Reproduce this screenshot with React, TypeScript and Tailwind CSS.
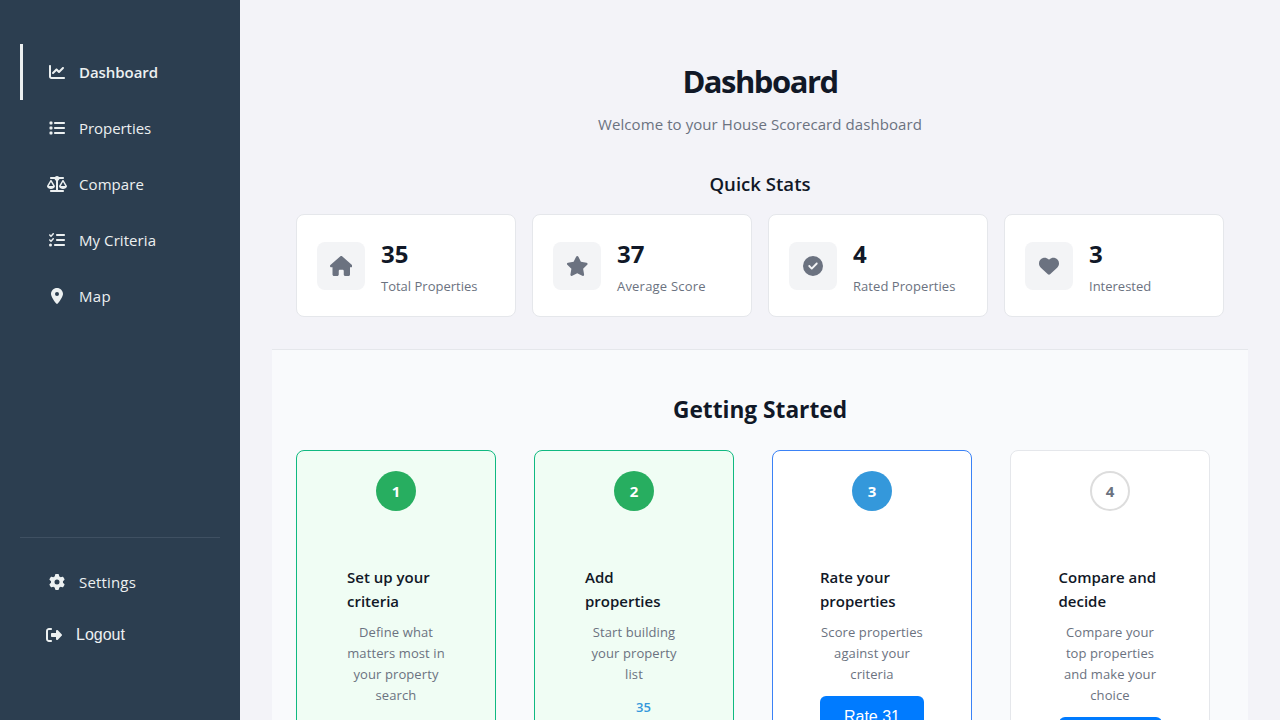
import type { ReactNode } from 'react';
import type { IconType } from 'react-icons';
import {
  FaChartLine,
  FaCircleCheck,
  FaGear,
  FaHeart,
  FaHouse,
  FaList,
  FaListCheck,
  FaLocationDot,
  FaRightFromBracket,
  FaScaleBalanced,
  FaStar,
} from 'react-icons/fa6';

interface NavEntry {
  label: string;
  icon: IconType;
  iconClass?: string;
  textClass: string;
  active?: boolean;
}

const navEntries: NavEntry[] = [
  { label: 'Dashboard', icon: FaChartLine, textClass: 'font-semibold tracking-[-0.05px]', active: true },
  { label: 'Properties', icon: FaList, textClass: 'tracking-[-0.05px]' },
  { label: 'Compare', icon: FaScaleBalanced, iconClass: 'w-5 h-4', textClass: 'tracking-[0.08px]' },
  { label: 'My Criteria', icon: FaListCheck, textClass: 'tracking-[0.07px]' },
  { label: 'Map', icon: FaLocationDot, textClass: 'tracking-[0.3px]' },
];

function NavItem({ label, icon: Icon, iconClass = 'w-4 h-4', textClass, active }: NavEntry) {
  return (
    <a
      className={`flex h-14 items-center gap-3 border-l-[3px] pl-6 text-[15px] leading-6 text-[#ecf0f1] ${
        active ? 'border-[#ecf0f1]' : 'border-transparent'
      }`}
    >
      <span className="flex w-5 shrink-0 justify-center">
        <Icon className={iconClass} />
      </span>
      <span className={textClass}>{label}</span>
    </a>
  );
}

function Sidebar() {
  return (
    <aside className="flex h-full w-60 shrink-0 flex-col bg-[#2c3e50] px-5 pt-11">
      <nav className="flex flex-col">
        {navEntries.map((entry) => (
          <NavItem key={entry.label} {...entry} />
        ))}
      </nav>
      <div className="mt-auto h-[183px] border-t border-[#3f5062] pt-4">
        <NavItem label="Settings" icon={FaGear} textClass="tracking-[0.17px]" />
        <button className="mt-px flex h-12 items-center gap-3 pl-6 font-['Liberation_Sans',sans-serif] text-base leading-6 text-[#ecf0f1]">
          <span className="flex w-5 justify-center">
            <FaRightFromBracket className="h-4 w-4" />
          </span>
          Logout
        </button>
      </div>
    </aside>
  );
}

interface Stat {
  value: string;
  label: string;
  labelClass: string;
  icon: IconType;
  iconClass: string;
}

const stats: Stat[] = [
  { value: '35', label: 'Total Properties', labelClass: '', icon: FaHouse, iconClass: 'h-5 w-[22.5px]' },
  { value: '37', label: 'Average Score', labelClass: 'tracking-[0.2px]', icon: FaStar, iconClass: 'h-5 w-[22.5px]' },
  { value: '4', label: 'Rated Properties', labelClass: 'tracking-[0.06px]', icon: FaCircleCheck, iconClass: 'h-5 w-5' },
  { value: '3', label: 'Interested', labelClass: '', icon: FaHeart, iconClass: 'h-5 w-5' },
];

function StatCard({ value, label, labelClass, icon: Icon, iconClass }: Stat) {
  return (
    <div className="flex h-[103px] items-center gap-4 rounded-lg border border-gray-200 bg-white px-5">
      <div className="flex h-12 w-12 shrink-0 items-center justify-center rounded-lg bg-[#f3f4f6] text-[#6b7280]">
        <Icon className={iconClass} />
      </div>
      <div className="flex flex-col gap-1 pt-0.5">
        <div className="text-2xl leading-9 font-bold text-[#111827]">{value}</div>
        <div className={`text-[13px] leading-[21px] whitespace-nowrap text-[#6b7280] ${labelClass}`}>{label}</div>
      </div>
    </div>
  );
}

interface Step {
  number: number;
  title: string[];
  description: string[];
  cardClass: string;
  badgeClass: string;
  bodyClass: string;
  footer?: ReactNode;
}

function StepButton({ children }: { children: ReactNode }) {
  return (
    <button className="mt-[11px] w-full rounded-md bg-[#007bff] px-3 pt-[9px] pb-2 font-['Liberation_Sans',sans-serif] text-base leading-6 whitespace-nowrap text-white">
      {children}
    </button>
  );
}

const steps: Step[] = [
  {
    number: 1,
    title: ['Set up your', 'criteria'],
    description: ['Define what', 'matters most in', 'your property', 'search'],
    cardClass: 'border-[#10b981] bg-[#f0fdf4]',
    badgeClass: 'bg-[#27ae60] text-white',
    bodyClass: 'w-[98px]',
  },
  {
    number: 2,
    title: ['Add', 'properties'],
    description: ['Start building', 'your property', 'list'],
    cardClass: 'border-[#10b981] bg-[#f0fdf4]',
    badgeClass: 'bg-[#27ae60] text-white',
    bodyClass: 'w-[98px]',
    footer: (
      <div className="mt-3 pl-[19px] text-center text-[13px] leading-[21px] font-semibold text-[#3498db]">35</div>
    ),
  },
  {
    number: 3,
    title: ['Rate your', 'properties'],
    description: ['Score properties', 'against your', 'criteria'],
    cardClass: 'border-[#3b82f6] bg-white',
    badgeClass: 'bg-[#3498db] text-white',
    bodyClass: 'w-[104px]',
    footer: <StepButton>Rate 31</StepButton>,
  },
  {
    number: 4,
    title: ['Compare and', 'decide'],
    description: ['Compare your', 'top properties', 'and make your', 'choice'],
    cardClass: 'border-gray-200 bg-white',
    badgeClass: 'border-2 border-[#dddddd] text-[#6b7280]',
    bodyClass: 'w-[103px]',
    footer: <StepButton>Compare</StepButton>,
  },
];

function StepCard({ number, title, description, cardClass, badgeClass, bodyClass, footer }: Step) {
  return (
    <div className={`flex h-[360px] w-[200px] flex-col items-center rounded-lg border pt-5 ${cardClass}`}>
      <div
        className={`flex h-10 w-10 shrink-0 items-center justify-center rounded-full text-[15px] leading-6 font-bold ${badgeClass}`}
      >
        {number}
      </div>
      <div className={`mt-[54px] ${bodyClass}`}>
        <h3 className="text-[15px] leading-6 font-semibold whitespace-nowrap text-[#111827]">
          {title.map((line) => (
            <span key={line} className="block">
              {line}
            </span>
          ))}
        </h3>
        <p className="mt-[9px] text-center text-[13px] leading-[21px] tracking-[0.1px] whitespace-nowrap text-[#6b7280]">
          {description.map((line) => (
            <span key={line} className="block">
              {line}
            </span>
          ))}
        </p>
        {footer}
      </div>
    </div>
  );
}

export default function App() {
  return (
    <div className="flex h-screen overflow-hidden bg-[#f3f3f8] font-['Open_Sans','Noto_Sans',sans-serif]">
      <Sidebar />
      <main className="min-w-0 flex-1 overflow-hidden px-8 pt-[57px]">
        <header className="text-center">
          <h1 className="text-[31px] leading-[48px] font-bold tracking-[-1.5px] text-[#111827]">Dashboard</h1>
          <p className="mt-[7px] text-[15px] leading-6 tracking-[0.08px] text-[#6b7280]">
            Welcome to your House Scorecard dashboard
          </p>
        </header>
        <section className="mt-[34px] px-6">
          <h2 className="text-center text-[18.6px] leading-7 font-semibold text-[#111827]">Quick Stats</h2>
          <div className="mt-4 grid grid-cols-4 gap-4">
            {stats.map((stat) => (
              <StatCard key={stat.label} {...stat} />
            ))}
          </div>
        </section>
        <section className="mt-8 border-t border-gray-200 bg-[#f9fafc] px-6 pt-[42px]">
          <h2 className="text-center text-[22.7px] leading-9 font-bold text-[#111827]">Getting Started</h2>
          <div className="mt-[22px] flex gap-[38px]">
            {steps.map((step) => (
              <StepCard key={step.number} {...step} />
            ))}
          </div>
        </section>
      </main>
    </div>
  );
}
